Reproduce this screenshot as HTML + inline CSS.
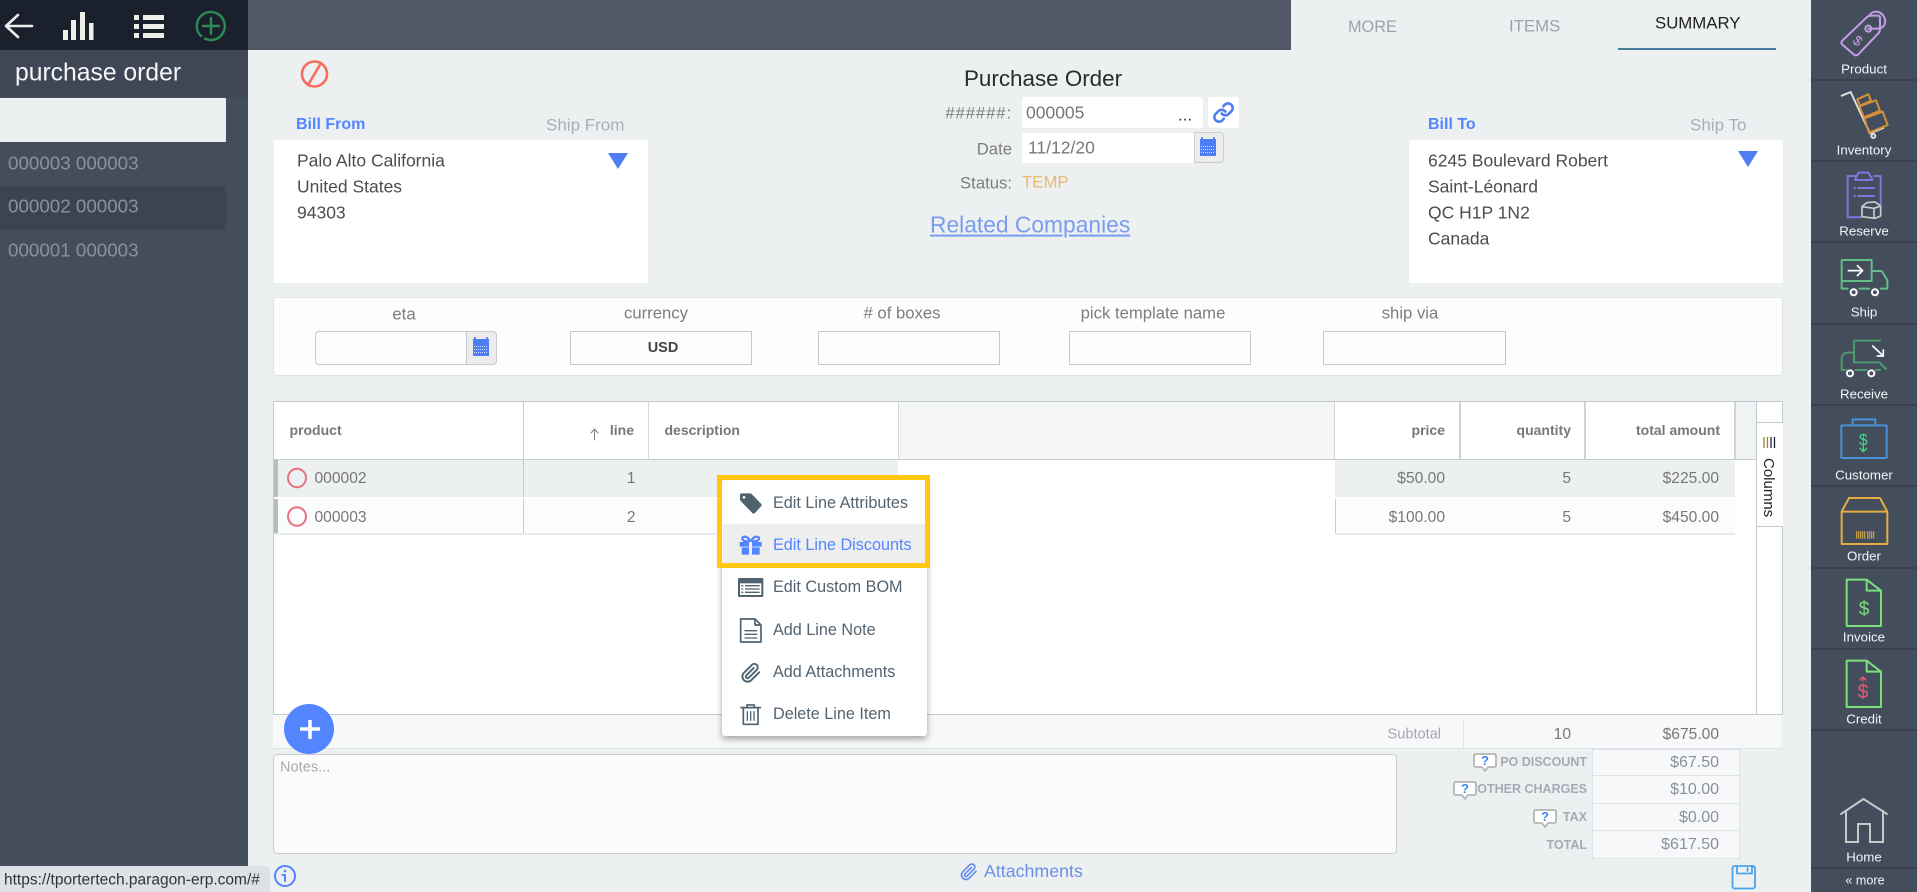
<!DOCTYPE html>
<html lang="en"><head><meta charset="utf-8"><title>Purchase Order</title>
<style>
html,body{margin:0;padding:0}
body{width:1917px;height:892px;position:relative;overflow:hidden;background:#edf0f1;font-family:"Liberation Sans",sans-serif}
.b{position:absolute;box-sizing:border-box}
.t{position:absolute;white-space:nowrap;line-height:1;transform:translateY(-50%)}
.c{transform:translate(-50%,-50%)}
.row{font-size:18.8px;color:#8b919b;left:8px}
.addr{font-size:17.5px;color:#4d4d4d}
.lab{font-size:16.7px;color:#7d7d7d}
.fl{font-size:16.7px;color:#7d7d7d}
.inp{background:#fdfdfd;border:1px solid #bfc9d1}
.h{font-size:14px;font-weight:bold;color:#777}
.v{font-size:15.6px;color:#777}
.m{font-size:16.2px;color:#54636f;left:773px}
.s{font-size:13.3px;color:#f2f4f7}
.tl{font-size:12.5px;font-weight:bold;color:#a6a9b6}
.tv{font-size:16px;color:#8a909b}
.tr{position:absolute;left:1592px;width:148px;background:#f7f8fa;border:1px solid #dfe3e8;box-sizing:border-box}
</style></head><body>

<!-- left sidebar -->
<div class="b" style="left:0;top:0;width:248px;height:892px;background:#444d5c"></div>
<div class="b" style="left:0;top:0;width:248px;height:50px;background:#1a202c"></div>
<div class="b" style="left:0;top:50px;width:248px;height:47px;background:#3f4756"></div>
<div class="t" style="left:15px;top:74px;font-size:24.7px;color:#f5f6f7">purchase order</div>
<div class="b" style="left:0;top:98px;width:226px;height:44px;background:#edf0f1"></div>
<div class="b" style="left:0;top:186px;width:226px;height:44px;background:#3c4452"></div>
<div class="t row" style="top:163.5px">000003 000003</div>
<div class="t row" style="top:207px">000002 000003</div>
<div class="t row" style="top:250.5px">000001 000003</div>

<!-- top bar -->
<div class="b" style="left:248px;top:0;width:1043px;height:50px;background:#535869"></div>
<div class="t" style="left:1348px;top:27px;font-size:16.3px;color:#9ca1ae">MORE</div>
<div class="t" style="left:1509px;top:27px;font-size:16.8px;color:#9ca1ae">ITEMS</div>
<div class="t" style="left:1655px;top:24px;font-size:16.8px;color:#222">SUMMARY</div>
<div class="b" style="left:1618px;top:48px;width:158px;height:2px;background:#457b9d"></div>

<!-- address header -->
<div class="t" style="left:296px;top:125px;font-size:16px;font-weight:bold;color:#5285ff">Bill From</div>
<div class="t" style="left:546px;top:125px;font-size:17px;color:#a9adb8">Ship From</div>
<div class="b" style="left:274px;top:140px;width:374px;height:143px;background:#fff"></div>
<div class="t addr" style="left:297px;top:161px">Palo Alto California</div>
<div class="t addr" style="left:297px;top:187px">United States</div>
<div class="t addr" style="left:297px;top:213px">94303</div>

<div class="t" style="left:1428px;top:125px;font-size:16px;font-weight:bold;color:#5285ff">Bill To</div>
<div class="t" style="left:1690px;top:125px;font-size:17px;color:#a9adb8">Ship To</div>
<div class="b" style="left:1409px;top:140px;width:374px;height:143px;background:#fff"></div>
<div class="t addr" style="left:1428px;top:161px">6245 Boulevard Robert</div>
<div class="t addr" style="left:1428px;top:187px">Saint-Léonard</div>
<div class="t addr" style="left:1428px;top:213px">QC H1P 1N2</div>
<div class="t addr" style="left:1428px;top:239px">Canada</div>

<!-- center -->
<div class="t" style="left:964px;top:79px;font-size:22.4px;color:#2b2b2b">Purchase Order</div>
<div class="t lab" style="right:905px;top:114px;letter-spacing:.9px">######:</div>
<div class="b" style="left:1022px;top:97px;width:181px;height:31px;background:#fff;border-radius:3px"></div>
<div class="t" style="left:1026px;top:113px;font-size:17.5px;color:#777">000005</div>
<div class="t" style="left:1178px;top:115px;font-size:17px;color:#333">...</div>
<div class="b" style="left:1208px;top:97px;width:31px;height:31px;background:#fff;border-radius:3px"></div>
<div class="t lab" style="right:905px;top:150px">Date</div>
<div class="b" style="left:1194px;top:132px;width:30px;height:31px;background:#ececec;border:1px solid #ccc;border-radius:0 4px 4px 0"></div>
<div class="b" style="left:1022px;top:133px;width:172px;height:30px;background:#fff;border-radius:3px 0 0 3px"></div>
<div class="t" style="left:1028px;top:148px;font-size:17.5px;color:#777">11/12/20</div>
<div class="t lab" style="right:905px;top:184px">Status:</div>
<div class="t" style="left:1022px;top:183px;font-size:16.8px;color:#e9b872">TEMP</div>
<div class="t" style="left:930px;top:225px;font-size:22.8px;color:#7a9cf0;text-decoration:underline">Related Companies</div>

<!-- fields panel -->
<div class="b" style="left:273px;top:297px;width:1510px;height:79px;background:#fdfdfd;border:1px solid #dfe3e6;border-radius:2px"></div>
<div class="t fl c" style="left:404px;top:315px">eta</div>
<div class="t fl c" style="left:656px;top:314px">currency</div>
<div class="t fl c" style="left:902px;top:314px"># of boxes</div>
<div class="t fl c" style="left:1153px;top:314px">pick template name</div>
<div class="t fl c" style="left:1410px;top:314px">ship via</div>
<div class="b" style="left:466px;top:331px;width:31px;height:34px;background:#ececec;border:1px solid #c5ccd2;border-radius:0 4px 4px 0"></div>
<div class="b inp" style="left:315px;top:331px;width:152px;height:34px;border-radius:4px 0 0 4px"></div>
<div class="b inp" style="left:570px;top:331px;width:182px;height:34px"></div>
<div class="t c" style="left:663px;top:348px;font-size:14.5px;font-weight:bold;color:#444">USD</div>
<div class="b inp" style="left:818px;top:331px;width:182px;height:34px"></div>
<div class="b inp" style="left:1069px;top:331px;width:182px;height:34px"></div>
<div class="b inp" style="left:1323px;top:331px;width:183px;height:34px"></div>

<!-- table -->
<div class="b" style="left:273px;top:401px;width:1510px;height:314px;background:#fff;border:1px solid #c3c8cd;border-radius:2px"></div>
<div class="b" style="left:898px;top:402px;width:437px;height:57px;background:#f4f6f6"></div>
<div class="b" style="left:1735px;top:402px;width:22px;height:57px;background:#f0f3f3"></div>
<div class="b" style="left:274px;top:459px;width:1483px;height:1px;background:#c6cbd0"></div>
<div class="b" style="left:523px;top:402px;width:1px;height:57px;background:#c6cbd0"></div>
<div class="b" style="left:648px;top:402px;width:1px;height:57px;background:#d5d9dc"></div>
<div class="b" style="left:898px;top:402px;width:1px;height:57px;background:#d5d9dc"></div>
<div class="b" style="left:1334px;top:402px;width:1px;height:57px;background:#cfd3d7"></div>
<div class="b" style="left:1459px;top:402px;width:2px;height:57px;background:#cfd3d7"></div>
<div class="b" style="left:1584px;top:402px;width:2px;height:57px;background:#cfd3d7"></div>
<div class="b" style="left:1734px;top:402px;width:2px;height:57px;background:#cfd3d7"></div>
<div class="b" style="left:1756px;top:402px;width:1px;height:312px;background:#c3c8cd"></div>
<div class="b" style="left:1756px;top:422px;width:27px;height:105px;background:#fff;border:1px solid #c3c8cd;border-right:0"></div>
<div class="t" style="left:1761px;top:458px;font-size:15px;color:#222;writing-mode:vertical-rl;transform:none">Columns</div>

<div class="t h" style="left:289.5px;top:430px">product</div>
<div class="t h" style="right:1283px;top:430px">line</div>
<div class="t h" style="left:664.5px;top:430px">description</div>
<div class="t h" style="right:472px;top:430px">price</div>
<div class="t h" style="right:346px;top:430px">quantity</div>
<div class="t h" style="right:197px;top:430px">total amount</div>

<!-- rows -->
<div class="b" style="left:274px;top:460px;width:624px;height:37px;background:#edf0f1"></div>
<div class="b" style="left:1335px;top:460px;width:400px;height:37px;background:#edf0f1"></div>
<div class="b" style="left:274px;top:499px;width:624px;height:34px;background:#fbfcfe"></div>
<div class="b" style="left:1335px;top:499px;width:400px;height:34px;background:#fbfcfe"></div>
<div class="b" style="left:274px;top:533px;width:624px;height:2px;background:#e9ecef"></div>
<div class="b" style="left:1335px;top:533px;width:400px;height:2px;background:#e9ecef"></div>
<div class="b" style="left:274px;top:460px;width:4px;height:37px;background:#b9bcbf"></div>
<div class="b" style="left:274px;top:499px;width:4px;height:34px;background:#b9bcbf"></div>
<div class="b" style="left:523px;top:460px;width:1px;height:37px;background:#c6cbd0"></div>
<div class="b" style="left:523px;top:499px;width:1px;height:34px;background:#c6cbd0"></div>
<div class="b" style="left:1335px;top:499px;width:1px;height:34px;background:#c6cbd0"></div>
<div class="t v" style="left:314.5px;top:479px">000002</div>
<div class="t v" style="left:314.5px;top:517.5px">000003</div>
<div class="t v" style="right:1281.5px;top:479px">1</div>
<div class="t v" style="right:1281.5px;top:517.5px">2</div>
<div class="t v" style="right:472px;top:479px">$50.00</div>
<div class="t v" style="right:472px;top:517.5px">$100.00</div>
<div class="t v" style="right:346px;top:479px">5</div>
<div class="t v" style="right:346px;top:517.5px">5</div>
<div class="t v" style="right:198px;top:479px">$225.00</div>
<div class="t v" style="right:198px;top:517.5px">$450.00</div>

<!-- subtotal -->
<div class="b" style="left:273px;top:715px;width:1508px;height:34px;background:#f7f8fa;border-bottom:1px solid #dfe3e8"></div>
<div class="b" style="left:1463px;top:719px;width:1px;height:30px;background:#dfe3e8"></div>
<div class="t" style="left:1387.5px;top:734.5px;font-size:14.6px;color:#a3a6ad">Subtotal</div>
<div class="t v" style="right:346px;top:734.5px">10</div>
<div class="t v" style="right:198px;top:734.5px">$675.00</div>

<!-- notes -->
<div class="b" style="left:273px;top:754px;width:1124px;height:100px;background:#fbfbfb;border:1px solid #ccc;border-radius:4px"></div>
<div class="t" style="left:280px;top:768px;font-size:14.6px;color:#a9a9a9">Notes...</div>

<!-- totals -->
<div class="tr" style="top:749px;height:27px"></div>
<div class="tr" style="top:775px;height:29px"></div>
<div class="tr" style="top:803px;height:28px"></div>
<div class="tr" style="top:830px;height:29px"></div>
<div class="t tl" style="right:330px;top:762px">PO DISCOUNT</div>
<div class="t tl" style="right:330px;top:789px">OTHER CHARGES</div>
<div class="t tl" style="right:330px;top:817px">TAX</div>
<div class="t tl" style="right:330px;top:845px">TOTAL</div>
<div class="t tv" style="right:198px;top:763px">$67.50</div>
<div class="t tv" style="right:198px;top:790px">$10.00</div>
<div class="t tv" style="right:198px;top:818px">$0.00</div>
<div class="t tv" style="right:198px;top:845px">$617.50</div>

<!-- bottom -->
<div class="b" style="left:0;top:866px;width:270px;height:26px;background:#dee1e6;border-radius:0 4px 0 0"></div>
<div class="t" style="left:4px;top:880px;font-size:15.5px;color:#333">https://tportertech.paragon-erp.com/#</div>
<div class="t" style="left:984px;top:872px;font-size:17.8px;color:#6a8fe8">Attachments</div>

<!-- right sidebar -->
<div class="b" style="left:1811px;top:0;width:106px;height:892px;background:#444d5c"></div>
<div class="b" style="left:1811px;top:79px;width:106px;height:2px;background:#39414e"></div>
<div class="b" style="left:1811px;top:160px;width:106px;height:2px;background:#39414e"></div>
<div class="b" style="left:1811px;top:241px;width:106px;height:2px;background:#39414e"></div>
<div class="b" style="left:1811px;top:323px;width:106px;height:2px;background:#39414e"></div>
<div class="b" style="left:1811px;top:404px;width:106px;height:2px;background:#39414e"></div>
<div class="b" style="left:1811px;top:485px;width:106px;height:2px;background:#39414e"></div>
<div class="b" style="left:1811px;top:567px;width:106px;height:2px;background:#39414e"></div>
<div class="b" style="left:1811px;top:648px;width:106px;height:2px;background:#39414e"></div>
<div class="b" style="left:1811px;top:729px;width:106px;height:2px;background:#39414e"></div>
<div class="b" style="left:1811px;top:867px;width:106px;height:2px;background:#39414e"></div>
<div class="t s c" style="left:1864px;top:68.5px">Product</div>
<div class="t s c" style="left:1864px;top:149.5px">Inventory</div>
<div class="t s c" style="left:1864px;top:230.5px">Reserve</div>
<div class="t s c" style="left:1864px;top:311.5px">Ship</div>
<div class="t s c" style="left:1864px;top:393.5px">Receive</div>
<div class="t s c" style="left:1864px;top:474.5px">Customer</div>
<div class="t s c" style="left:1864px;top:555.5px">Order</div>
<div class="t s c" style="left:1864px;top:637px">Invoice</div>
<div class="t s c" style="left:1864px;top:718.5px">Credit</div>
<div class="t s c" style="left:1864px;top:857px">Home</div>
<div class="t s c" style="left:1865px;top:881px;font-size:12.6px">« more</div>

<!-- popup -->
<div class="b" style="left:722px;top:480px;width:205px;height:256px;background:#fff;border-radius:3px;box-shadow:0 3px 7px rgba(0,0,0,.35)"></div>
<div class="b" style="left:723px;top:524px;width:203px;height:40px;background:#eee"></div>
<div class="b" style="left:717px;top:475px;width:213px;height:93px;border:5px solid #ffc80e"></div>
<div class="t m" style="top:503px">Edit Line Attributes</div>
<div class="t m" style="top:545px;color:#5285ff">Edit Line Discounts</div>
<div class="t m" style="top:587px">Edit Custom BOM</div>
<div class="t m" style="top:630px">Add Line Note</div>
<div class="t m" style="top:672px">Add Attachments</div>
<div class="t m" style="top:714px">Delete Line Item</div>

<!-- icon layer -->
<svg class="b" style="left:0;top:0" width="1917" height="892" viewBox="0 0 1917 892" fill="none" stroke-linecap="round" stroke-linejoin="round">
 <!-- top-left -->
 <path d="M32 26H7M18 15 6 26l12 11" stroke="#eee" stroke-width="2.6"/>
 <g fill="#efefe9"><rect x="63" y="30" width="5" height="10"/><rect x="71" y="20" width="5" height="20"/><rect x="80" y="12" width="5" height="28"/><rect x="89" y="23" width="4.5" height="17"/>
  <rect x="134" y="15" width="5" height="5"/><rect x="143" y="15" width="21" height="5"/><rect x="134" y="24" width="5" height="5"/><rect x="143" y="24" width="21" height="5"/><rect x="134" y="33" width="5" height="5"/><rect x="143" y="33" width="21" height="5"/></g>
 <path d="M201 36a14 14 0 1 1 10 4c-2 0-4-.4-6-1.200" stroke="#2e8b57" stroke-width="2.400"/>
 <path d="M211 18v16M203 26h16" stroke="#2e8b57" stroke-width="2.400"/>
 <!-- ban -->
 <g stroke="#f96d5f" stroke-width="2.600"><circle cx="314.500" cy="74" r="12.500"/><path d="M308 85 321 63"/></g>
 <!-- triangles -->
 <path d="M608 153h20l-10 16z" fill="#4f7df3"/>
 <path d="M1738 151h20l-10 16z" fill="#4f7df3"/>
 <!-- link -->
 <g transform="translate(1212.500 101.500) scale(.92)" stroke="#4f7df3" stroke-width="2.800"><path d="M10 13a5 5 0 0 0 7.540.540l3-3a5 5 0 0 0-7.070-7.070l-1.720 1.710"/><path d="M14 11a5 5 0 0 0-7.540-.540l-3 3a5 5 0 0 0 7.070 7.070l1.710-1.710"/></g>
 <!-- calendars -->
 <g><rect x="1200" y="139" width="16" height="17" fill="#4f7df3"/><path d="M1202 138v2M1214 138v2" stroke="#4f7df3" stroke-width="2"/><path d="M1201 146.500h14M1201 149.500h14M1201 152.500h14" stroke="#cfdcff" stroke-width="1" stroke-dasharray="1 1" stroke-linecap="butt"/></g>
 <g><rect x="473" y="339" width="16" height="17" fill="#4f7df3"/><path d="M475 338v2M487 338v2" stroke="#4f7df3" stroke-width="2"/><path d="M474 346.500h14M474 349.500h14M474 352.500h14" stroke="#cfdcff" stroke-width="1" stroke-dasharray="1 1" stroke-linecap="butt"/></g>
 <!-- row circles, sort arrow -->
 <g stroke="#e8707f" stroke-width="2"><ellipse cx="297" cy="478" rx="9" ry="9.300"/><ellipse cx="297" cy="516.500" rx="9" ry="9.300"/></g>
 <path d="M594.500 440v-10M591 433l3.500-4 3.500 4" stroke="#8a7f70" stroke-width="1"/>
 <!-- columns icon -->
 <path d="M1764 437v11M1767.500 437v11" stroke="#a67a30" stroke-width="1.300" stroke-linecap="butt"/><path d="M1771 437v11M1774.500 437v11" stroke="#223" stroke-width="1.300" stroke-linecap="butt"/>
 <!-- FAB -->
 <circle cx="309" cy="729" r="25" fill="#5285ff"/><path d="M300 729h20M310 720v19" stroke="#fff" stroke-width="3.600" stroke-linecap="butt"/>
 <!-- info -->
 <circle cx="285" cy="876" r="10" stroke="#5285ff" stroke-width="2"/><path d="M285 875v6M282.500 875h2.500" stroke="#5285ff" stroke-width="2"/><circle cx="285" cy="871" r="1.300" fill="#5285ff"/>
 <!-- attachments clip -->
 <g transform="translate(960 863) scale(.75)" stroke="#6a8fe8" stroke-width="2.300"><path d="m21.440 11.050-9.190 9.190a6 6 0 0 1-8.490-8.490l9.190-9.190a4 4 0 0 1 5.660 5.660l-9.200 9.190a2 2 0 0 1-2.830-2.830l8.490-8.480"/></g>
 <!-- save -->
 <g stroke="#4aa3e8" stroke-width="1.800"><rect x="1732.500" y="866" width="22.500" height="22.500" rx="2"/><path d="M1737 866v7.500h15V866M1747.500 868v3"/></g>
 <!-- bubbles -->
 <g stroke="#b5b5b5" stroke-width="1.800" fill="#fff">
  <path d="M1476 754h18q2 0 2 2v9q0 2-2 2h-6l-3 4-3-4h-6q-2 0-2-2v-9q0-2 2-2z"/>
  <path d="M1456 782h18q2 0 2 2v9q0 2-2 2h-6l-3 4-3-4h-6q-2 0-2-2v-9q0-2 2-2z"/>
  <path d="M1536 810h18q2 0 2 2v9q0 2-2 2h-6l-3 4-3-4h-6q-2 0-2-2v-9q0-2 2-2z"/>
 </g>
 <g font-family="Liberation Sans,sans-serif" font-size="13" font-weight="bold" fill="#3a8be8" text-anchor="middle"><text x="1485" y="765">?</text><text x="1465" y="793">?</text><text x="1545" y="821">?</text></g>

 <!-- popup icons (coords from 3x crop) -->
 <g transform="translate(700 470) scale(.3333)">
  <path d="M120 76q0-6 6-6h24q3 0 5 2l28 29q4 4 0 8l-18 20q-4 4-8 0l-35-36q-2-2-2-5z" fill="#4f6270"/><circle cx="132" cy="82" r="4" fill="#fff"/>
  <path d="M151 214c-10-20-28-16-23-5 2 4 12 6 23 5zM153 214c10-20 28-16 23-5-2 4-12 6-23 5z" stroke="#5285ff" stroke-width="7"/>
  <rect x="119" y="216" width="66" height="14" rx="2" fill="#5285ff"/><rect x="125" y="232" width="54" height="22" rx="2" fill="#5285ff"/><rect x="147" y="216" width="9" height="38" fill="#eee"/>
  <rect x="114" y="324" width="76" height="57" rx="4" fill="#4f6270"/><rect x="120" y="340" width="64" height="35" fill="#fff"/>
  <path d="M124 347h6M135 347h44M124 357h6M135 357h44M124 367h6M135 367h44" stroke="#4f6270" stroke-width="4" stroke-linecap="butt"/>
  <g stroke="#4f6270" stroke-width="5"><path d="M122 447h43l18 18v51h-61zM165 447v18h18"/><path d="M135 482h35M135 493h35M135 504h35" stroke-width="4"/></g>
  <g transform="translate(122 578) scale(2.600)" stroke="#4f6270" stroke-width="2.200"><path d="m21.440 11.050-9.190 9.190a6 6 0 0 1-8.490-8.490l9.190-9.190a4 4 0 0 1 5.660 5.660l-9.200 9.190a2 2 0 0 1-2.830-2.830l8.490-8.480"/></g>
  <g stroke="#4f6270" stroke-width="5"><path d="M123 713h58M141 713v-8h22v8M130 713v50h44v-50"/><path d="M142 725v26M152 725v26M162 725v26" stroke-width="4"/></g>
 </g>

 <!-- right sidebar icons, zoom-4 coordinates -->
 <g transform="translate(1800 0) scale(.3333)" stroke-width="6">
  <g stroke="#c39fe3"><path d="M127 122 200 52q5-5 12-5h22q6 0 6 7v34q0 7-5 12l-60 63q-6 6-13 1l-35-30q-6-6 0-12z"/><circle cx="205" cy="86" r="9"/><path d="M205 86c18-1 35 3 44-6 18-18-4-52-28-44-8 3-12 7-14 12"/></g>
  <text x="172" y="136" font-family="Liberation Sans,sans-serif" font-size="42" fill="#c39fe3" text-anchor="middle" transform="rotate(40 172 124)">$</text>
  <g stroke="#ddd"><path d="M125 287l27-11 58 124 40-16"/><circle cx="220" cy="408" r="6"/></g>
  <g stroke="#d79039"><path d="M172 298l33-15 8 19-33 15zM178 319l50-18 12 31-48 20zM193 355l55-20 15 40-56 23z"/></g>
  <g stroke="#7b78dd"><path d="M168 528h-25v124h39M222 528h20v84M165 540l10-22h30l13 22z"/><path d="M175 564h47M175 588h47"/><path d="M163 564h2M163 588h2"/></g>
  <g stroke="#ccc" stroke-width="5"><path d="M186 620v30l39 5 17-7v-30l-17-12-25 2zM186 620l36 5 20-7M222 625v30"/></g>
  <g stroke="#62bd86"><path d="M125 780h90v63h-90zM215 813h30l17 27v26h-20M125 843v23h18M178 866h30"/></g>
  <g stroke="#fff"><circle cx="161" cy="877" r="9"/><circle cx="225" cy="877" r="9"/><path d="M145 812h43M172 797l16 15-16 15" stroke-width="5"/></g>
 </g>
 <!-- zoom-5 coordinates -->
 <g transform="translate(1800 320) scale(.3333)" stroke-width="6">
  <g stroke="#4c9c6b"><path d="M240 62h-78v65h76l20 20M162 98h-17q-20 0-20 22v30h13M166 150h34M228 150h12"/></g>
  <g stroke="#fff"><circle cx="150" cy="160" r="9"/><circle cx="214" cy="160" r="9"/><path d="M218 78l32 30M250 90v18h-18" stroke-width="5"/></g>
  <g stroke="#4a90d9"><rect x="124" y="316" width="136" height="98" rx="3"/><path d="M158 316v-18h68v18"/></g>
  <text x="190" y="375" font-family="Liberation Sans,sans-serif" font-size="46" fill="#3ddc84" text-anchor="middle">$</text>
  <path d="M190 378v17M180 385l10 10 10-10" stroke="#3ddc84" stroke-width="4"/>
  <g stroke="#e3ad3f"><path d="M125 575h137v97H125zM125 575l22-41h93l22 41"/></g>
  <path d="M170 634v22M176 634v22M182 634v22M188 634v22M194 634v22M203 634v22M209 634v22M215 634v22M221 634v22" stroke="#c9a04e" stroke-width="3.600" stroke-linecap="butt"/>
 </g>
 <!-- zoom-12 coordinates -->
 <g transform="translate(1800 570) scale(.3333)" stroke-width="6" stroke="#79e07b">
  <path d="M200 29h-60v139h103V62zM200 29v33h43"/>
  <path d="M200 272h-60v139h103V305zM200 272v33h43"/>
 </g>
 <g font-family="Liberation Sans,sans-serif" font-size="19" text-anchor="middle">
  <text x="1864" y="615" fill="#79e07b">$</text>
  <text x="1863" y="698" fill="#e8567a">$</text>
 </g>
 <path d="M1863 681v-4M1860 680l3-3 3 3" stroke="#e8567a" stroke-width="1.300"/>
 <!-- home -->
 <path d="M1841 814l22.500-15 23.500 15M1846 811v31h12v-18h12v18h13v-31" stroke="#c8c8c8" stroke-width="2" stroke-linejoin="miter"/>
</svg>
</body></html>
